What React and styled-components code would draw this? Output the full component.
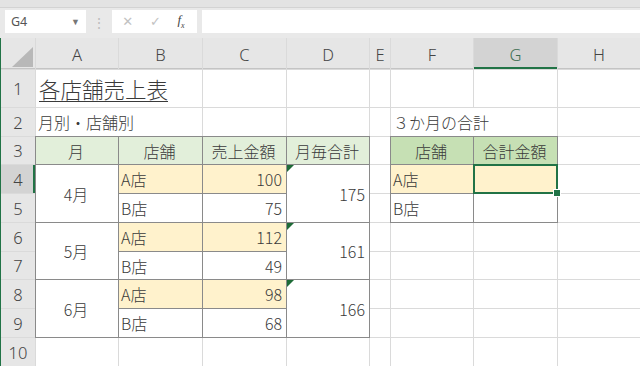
import React from 'react';
import styled, { createGlobalStyle, css } from 'styled-components';

const Global = createGlobalStyle`
  html, body { margin: 0; padding: 0; background: #ffffff; overflow: hidden; }
  body { font-family: "Noto Sans CJK JP", "Noto Sans", sans-serif; }
  * { box-sizing: border-box; }
`;

const Page = styled.div`
  width: 640px;
  height: 367px;
  display: flex;
  flex-direction: column;
  overflow: hidden;
  background: #ffffff;
`;

const RibbonEdge = styled.div`
  height: 8px;
  background: #e3e3e3;
  border-bottom: 1px solid #d3d3d3;
  flex: none;
`;

const FormulaBar = styled.div`
  height: 30px;
  flex: none;
  display: flex;
  align-items: flex-start;
  padding: 2px 0 0 5px;
  background: #e9e9e9;
`;

const NameBox = styled.div`
  width: 81px;
  height: 23px;
  background: #ffffff;
  display: flex;
  align-items: center;
  justify-content: space-between;
  padding: 0 6px 0 6px;
  font-family: "Noto Sans", "Liberation Sans", sans-serif;
  font-size: 12.5px;
  color: #555555;
`;

const DropArrow = styled.span`
  font-size: 9px;
  color: #777777;
`;

const Grip = styled.div`
  width: 26px;
  height: 23px;
  display: flex;
  align-items: center;
  justify-content: center;
  color: #bdbdbd;
  font-size: 14px;
`;

const FxBox = styled.div`
  width: 85px;
  height: 23px;
  background: #ffffff;
  display: flex;
  align-items: center;
  justify-content: space-around;
  padding: 0 4px 0 2px;
`;

const FxIcon = styled.span`
  color: ${p => (p.$active ? '#444444' : '#c2c2c2')};
  font-size: 13px;
  font-family: ${p => (p.$active ? '"Liberation Serif", serif' : '"DejaVu Sans", sans-serif')};
  font-style: ${p => (p.$active ? 'italic' : 'normal')};
  line-height: 1;
  sub { font-size: 8px; font-style: italic; }
`;

const FormulaInput = styled.div`
  flex: 1;
  height: 23px;
  margin-left: 5px;
  background: #ffffff;
`;

const Sheet = styled.div`
  flex: none;
  display: grid;
  grid-template-columns: 34px 82px 83px 83px 82px 20px 82px 83px 1fr;
  grid-template-rows: 31px 37px 28px 27px 28px 28px 28px 27px 28px 28px 28px;
  gap: 1px;
  background: #dadada;
  border-left: 1px solid #217346;
`;

const Corner = styled.div`
  background: #e6e6e6;
  display: flex;
  align-items: flex-end;
  justify-content: flex-end;
  padding: 0 2px 2px 0;
  box-shadow: inset 0 -1px 0 #c4c4c4;
`;

const ColHead = styled.div`
  background: ${p => (p.$selected ? '#d3d3d3' : '#e6e6e6')};
  color: ${p => (p.$selected ? '#3d6e52' : '#444444')};
  display: flex;
  align-items: center;
  justify-content: center;
  padding-top: 2px;
  font-family: "Noto Sans", "Liberation Sans", sans-serif;
  font-weight: 300;
  font-size: 16.5px;
  box-shadow: ${p => (p.$selected ? 'inset 0 -2px 0 #217346' : 'inset 0 -1px 0 #c4c4c4')};
`;

const RowHead = styled.div`
  background: ${p => (p.$selected ? '#d3d3d3' : '#e6e6e6')};
  color: #444444;
  display: flex;
  align-items: center;
  justify-content: center;
  font-family: "Noto Sans", "Liberation Sans", sans-serif;
  font-weight: 300;
  font-size: 16.5px;
  box-shadow: ${p => (p.$selected ? 'inset -2px 0 0 #217346' : 'none')};
`;

const fills = {
  yellow: '#fff2cc',
  light: '#e2efda',
  strong: '#c6e0b4',
};

const Cell = styled.div`
  grid-column: ${p => p.$col} / span ${p => p.$colSpan};
  grid-row: ${p => p.$row} / span ${p => p.$rowSpan};
  background: ${p => fills[p.$fill] || '#ffffff'};
  display: flex;
  align-items: center;
  justify-content: ${p =>
    p.$align === 'right' ? 'flex-end' : p.$align === 'center' ? 'center' : 'flex-start'};
  padding: 0 4px 0 2px;
  font-size: 16px;
  font-weight: 300;
  color: #3a3a3a;
  white-space: nowrap;
  ${p => p.$boxed && css`outline: 1px solid #8a8a8a;`}
  ${p => p.$flag && css`
    position: relative;
    &::before {
      content: '';
      position: absolute;
      top: 0;
      left: 0;
      width: 0;
      height: 0;
      border-top: 7px solid #1e6b37;
      border-right: 7px solid transparent;
    }
  `}
  ${p => p.$selected && css`
    position: relative;
    z-index: 1;
    outline: 2px solid #217346;
    outline-offset: -1px;
    &::after {
      content: '';
      position: absolute;
      right: -4px;
      bottom: -4px;
      width: 6px;
      height: 6px;
      background: #217346;
      border: 1px solid #ffffff;
    }
  `}
`;

const Title = styled.span`
  font-size: 21.5px;
  text-decoration: underline;
  text-decoration-thickness: 1px;
  text-underline-offset: 3px;
  padding-left: 1px;
`;

const COLS = ['A', 'B', 'C', 'D', 'E', 'F', 'G', 'H'];
const ROWS = [1, 2, 3, 4, 5, 6, 7, 8, 9, 10];

const DATA = {
  A1: { text: '各店舗売上表', colSpan: 2, title: true },
  A2: { text: '月別・店舗別', colSpan: 2 },
  F2: { text: '３か月の合計', colSpan: 2 },
  A3: { text: '月', fill: 'light', align: 'center' },
  B3: { text: '店舗', fill: 'light', align: 'center' },
  C3: { text: '売上金額', fill: 'light', align: 'center' },
  D3: { text: '月毎合計', fill: 'light', align: 'center' },
  F3: { text: '店舗', fill: 'strong', align: 'center' },
  G3: { text: '合計金額', fill: 'strong', align: 'center' },
  A4: { text: '4月', rowSpan: 2, align: 'center' },
  B4: { text: 'A店', fill: 'yellow' },
  C4: { text: '100', fill: 'yellow', align: 'right' },
  D4: { text: '175', rowSpan: 2, align: 'right', flag: true },
  B5: { text: 'B店' },
  C5: { text: '75', align: 'right' },
  A6: { text: '5月', rowSpan: 2, align: 'center' },
  B6: { text: 'A店', fill: 'yellow' },
  C6: { text: '112', fill: 'yellow', align: 'right' },
  D6: { text: '161', rowSpan: 2, align: 'right', flag: true },
  B7: { text: 'B店' },
  C7: { text: '49', align: 'right' },
  A8: { text: '6月', rowSpan: 2, align: 'center' },
  B8: { text: 'A店', fill: 'yellow' },
  C8: { text: '98', fill: 'yellow', align: 'right' },
  D8: { text: '166', rowSpan: 2, align: 'right', flag: true },
  B9: { text: 'B店' },
  C9: { text: '68', align: 'right' },
  F4: { text: 'A店', fill: 'yellow' },
  G4: { text: '', fill: 'yellow', selected: true },
  F5: { text: 'B店' },
  G5: { text: '' },
};

const isBoxed = (ci, r) =>
  (ci >= 0 && ci <= 3 && r >= 3 && r <= 9) || (ci >= 5 && ci <= 6 && r >= 3 && r <= 5);

function buildCells() {
  const covered = new Set();
  const out = [];
  ROWS.forEach(r => {
    COLS.forEach((c, ci) => {
      const key = `${c}${r}`;
      if (covered.has(key)) return;
      const d = DATA[key] || {};
      const colSpan = d.colSpan || 1;
      const rowSpan = d.rowSpan || 1;
      for (let dc = 0; dc < colSpan; dc++) {
        for (let dr = 0; dr < rowSpan; dr++) {
          if (dc || dr) covered.add(`${COLS[ci + dc]}${r + dr}`);
        }
      }
      out.push(
        <Cell
          key={key}
          $col={ci + 2}
          $row={r + 1}
          $colSpan={colSpan}
          $rowSpan={rowSpan}
          $fill={d.fill}
          $align={d.align}
          $boxed={isBoxed(ci, r) && !d.selected}
          $flag={d.flag}
          $selected={d.selected}
        >
          {d.title ? <Title>{d.text}</Title> : d.text}
        </Cell>
      );
    });
  });
  return out;
}

export default function App() {
  return (
    <>
      <Global />
      <Page>
        <RibbonEdge />
        <FormulaBar>
          <NameBox>
            <span>G4</span>
            <DropArrow>▼</DropArrow>
          </NameBox>
          <Grip>⋮</Grip>
          <FxBox>
            <FxIcon>✕</FxIcon>
            <FxIcon>✓</FxIcon>
            <FxIcon $active>
              f<sub>x</sub>
            </FxIcon>
          </FxBox>
          <FormulaInput />
        </FormulaBar>
        <Sheet>
          <Corner>
            <svg width="21" height="20" viewBox="0 0 21 20">
              <polygon points="21,0 21,20 0,20" fill="#b8b8b8" />
            </svg>
          </Corner>
          {COLS.map(c => (
            <ColHead key={c} $selected={c === 'G'}>
              {c}
            </ColHead>
          ))}
          {ROWS.map(r => (
            <RowHead key={r} style={{ gridRow: r + 1 }} $selected={r === 4}>
              {r}
            </RowHead>
          ))}
          {buildCells()}
        </Sheet>
      </Page>
    </>
  );
}
